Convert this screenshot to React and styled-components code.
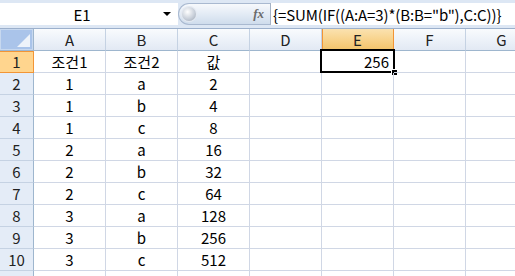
import React from "react";
import styled, { createGlobalStyle } from "styled-components";

const GlobalStyle = createGlobalStyle`
  html, body {
    margin: 0;
    padding: 0;
    background: #ffffff;
    overflow: hidden;
  }
  body {
    font-family: "Noto Sans CJK KR", "Noto Sans", sans-serif;
  }
`;

const Window = styled.div`
  width: 515px;
  height: 276px;
  overflow: hidden;
  background: #ffffff;
`;

const FormulaBar = styled.div`
  display: flex;
  align-items: stretch;
  height: 22px;
  padding: 3px 0 3px 0;
  background: #dde7f4;
  border-bottom: 1px solid #9cb0cc;
`;

const NameBox = styled.div`
  position: relative;
  width: 178px;
  display: flex;
  align-items: center;
  justify-content: center;
  background: #ffffff;
  font-size: 15px;
  color: #000;
  padding-right: 14px;
  box-sizing: border-box;
`;

const DropArrow = styled.span`
  position: absolute;
  right: 7px;
  top: 9px;
  width: 0;
  height: 0;
  border-left: 4px solid transparent;
  border-right: 4px solid transparent;
  border-top: 4px solid #000;
`;

const FxPill = styled.div`
  width: 92px;
  display: flex;
  align-items: center;
  justify-content: space-between;
  padding: 0 6px 0 3px;
  box-sizing: border-box;
  border-radius: 12px 0 0 12px;
  border: 1px solid #a9b9d0;
  border-right: none;
  background: linear-gradient(#f7f9fc, #e3ebf5 50%, #cfdcec);
`;

const Knob = styled.span`
  width: 14px;
  height: 14px;
  border-radius: 50%;
  background: radial-gradient(circle at 40% 35%, #ffffff, #c9d0da 55%, #9aa3b0);
  box-shadow: 0 0 0 1px #e4e9f1;
`;

const FxLabel = styled.span`
  font-family: "Liberation Serif", "DejaVu Serif", serif;
  font-style: italic;
  font-weight: bold;
  font-size: 13px;
  color: #6a6a6a;
`;

const FormulaInput = styled.div`
  flex: 1;
  display: flex;
  align-items: center;
  padding-left: 2px;
  background: #ffffff;
  border-left: 1px solid #a5b3c6;
  font-size: 15px;
  letter-spacing: -0.12px;
  color: #000;
  white-space: nowrap;
  overflow: hidden;
`;

const Sheet = styled.div`
  display: grid;
  grid-template-columns: 34px repeat(7, 72px);
  grid-auto-rows: 22px;
`;

const Corner = styled.div`
  position: relative;
  background: #aac4ea;
  border-right: 1px solid #9eb6ce;
  border-bottom: 1px solid #9eb6ce;
  box-shadow: inset 0 0 0 1px #c7d8ef;
  &::after {
    content: "";
    position: absolute;
    right: 3px;
    bottom: 3px;
    width: 0;
    height: 0;
    border-left: 13px solid transparent;
    border-bottom: 13px solid #eef3fa;
  }
`;

const ColHead = styled.div`
  display: flex;
  align-items: center;
  justify-content: center;
  font-size: 15px;
  color: #222;
  background: ${(p) =>
    p.$active
      ? "linear-gradient(#fbe2b0, #f8d38c 50%, #f3c36a)"
      : "linear-gradient(#f9fbfd, #edf2f9 50%, #e2e9f4)"};
  border-right: 1px solid ${(p) => (p.$active ? "#f29536" : "#c5d2e3")};
  border-bottom: 1px solid ${(p) => (p.$active ? "#f29536" : "#9eb6ce")};
  ${(p) => p.$active && "box-shadow: inset 1px 0 0 #f29536;"}
`;

const RowHead = styled.div`
  display: flex;
  align-items: center;
  justify-content: center;
  font-size: 15px;
  color: #222;
  background: ${(p) => (p.$active ? "#ffd58e" : "#e4ecf7")};
  border-right: 1px solid ${(p) => (p.$active ? "#f29536" : "#9eb6ce")};
  border-bottom: 1px solid ${(p) => (p.$active ? "#f29536" : "#c5d2e3")};
  ${(p) => p.$active && "box-shadow: inset 0 1px 0 #f29536;"}
`;

const Cell = styled.div`
  position: relative;
  display: flex;
  align-items: center;
  justify-content: ${(p) => (p.$right ? "flex-end" : "center")};
  padding: 0 4px;
  font-size: 15px;
  color: #000;
  border-right: 1px solid #d0d7e5;
  border-bottom: 1px solid #d0d7e5;
  white-space: nowrap;
`;

const Selection = styled.span`
  position: absolute;
  left: -2px;
  top: -2px;
  right: -2px;
  bottom: -1px;
  border: 2px solid #000;
  pointer-events: none;
  &::after {
    content: "";
    position: absolute;
    right: -5px;
    bottom: -5px;
    width: 5px;
    height: 5px;
    background: #000;
    border: 1px solid #fff;
  }
`;

const columns = ["A", "B", "C", "D", "E", "F", "G"];

const data = [
  ["조건1", "조건2", "값"],
  ["1", "a", "2"],
  ["1", "b", "4"],
  ["1", "c", "8"],
  ["2", "a", "16"],
  ["2", "b", "32"],
  ["2", "c", "64"],
  ["3", "a", "128"],
  ["3", "b", "256"],
  ["3", "c", "512"],
];

export default function App() {
  // one extra empty row peeks out at the bottom edge
  const rows = [...data, null];
  return (
    <Window>
      <GlobalStyle />
      <FormulaBar>
        <NameBox>
          E1
          <DropArrow />
        </NameBox>
        <FxPill>
          <Knob />
          <FxLabel>fx</FxLabel>
        </FxPill>
        <FormulaInput>{'{=SUM(IF((A:A=3)*(B:B="b"),C:C))}'}</FormulaInput>
      </FormulaBar>
      <Sheet>
        <Corner />
        {columns.map((c) => (
          <ColHead key={c} $active={c === "E"}>
            {c}
          </ColHead>
        ))}
        {rows.map((row, r) => (
          <React.Fragment key={r}>
            <RowHead $active={r === 0}>{row ? r + 1 : ""}</RowHead>
            {columns.map((c, ci) => {
              const selected = r === 0 && c === "E";
              return (
                <Cell key={c} $right={selected}>
                  {row && ci < 3 ? row[ci] : selected ? "256" : ""}
                  {selected && <Selection />}
                </Cell>
              );
            })}
          </React.Fragment>
        ))}
      </Sheet>
    </Window>
  );
}
